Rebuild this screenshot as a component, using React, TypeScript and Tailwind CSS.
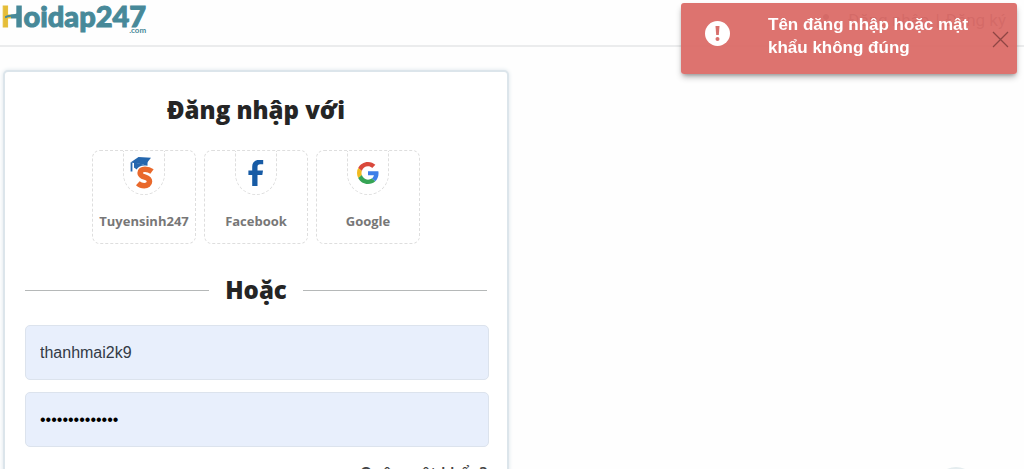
import { useState } from "react";
import type { ReactNode } from "react";
import { FaUser } from "react-icons/fa";

interface Provider {
  name: string;
  icon: ReactNode;
}

function TuyensinhIcon() {
  return (
    <svg width="30" height="34" viewBox="0 0 30 34" aria-hidden="true">
      <path
        d="M23 15.500C21 14 18.500 13.200 16 13.200c-3 0-4.900 1.500-4.900 3.800 0 2.500 2.200 3.400 4.900 4.200 3 .9 4.500 2 4.500 4.300 0 2.700-2.200 4.200-5.200 4.200-2.500 0-4.700-.9-6.500-2.500"
        fill="none"
        stroke="#e9692c"
        strokeWidth="5.500"
      />
      <path d="M1.500 6.500 9.500 1 22 1.700 16.500 8.700Z" fill="#2567ae" />
      <path d="M5 6.500 14.500 8.500 18.500 5 18.500 9.800C13 8.800 10 10 7.500 13.500 6.500 12.500 5.500 12 5 11.500Z" fill="#2567ae" />
      <path d="M2.500 6.500V15.500" stroke="#2567ae" strokeWidth="1.800" fill="none" />
    </svg>
  );
}

function FacebookIcon() {
  return (
    <svg width="16" height="26" viewBox="0 0 16 26" aria-hidden="true">
      <path
        d="M4.200 26V15H.4v-4.500h3.800V6.700C4.200 2.300 6.700 0 10.700 0h4.500v4.300h-3c-2 0-2.700.9-2.700 2.600v3.600h5.500L14.300 15H9.500v11Z"
        fill="#175ba5"
      />
    </svg>
  );
}

function GoogleIcon() {
  return (
    <svg width="22" height="22" viewBox="0 0 48 48" aria-hidden="true">
      <path fill="#d9483b" d="M24 9.500c3.540 0 6.710 1.220 9.210 3.600l6.850-6.850C35.900 2.380 30.470 0 24 0 14.620 0 6.510 5.380 2.560 13.220l7.980 6.190C12.430 13.720 17.740 9.500 24 9.500z" />
      <path fill="#3e7fe8" d="M46.980 24.550c0-1.570-.15-3.090-.38-4.550H24v9.020h12.940c-.58 2.960-2.260 5.480-4.780 7.180l7.730 6c4.510-4.180 7.090-10.360 7.090-17.650z" />
      <path fill="#f2bb20" d="M10.530 28.590c-.48-1.450-.76-2.990-.76-4.590s.27-3.140.76-4.590l-7.980-6.190C.92 16.460 0 20.120 0 24c0 3.880.92 7.540 2.560 10.780l7.970-6.190z" />
      <path fill="#36a455" d="M24 48c6.480 0 11.930-2.130 15.890-5.810l-7.730-6c-2.150 1.450-4.920 2.300-8.160 2.300-6.260 0-11.570-4.220-13.470-9.910l-7.980 6.190C6.510 42.620 14.620 48 24 48z" />
    </svg>
  );
}

const providers: Provider[] = [
  { name: "Tuyensinh247", icon: <TuyensinhIcon /> },
  { name: "Facebook", icon: <FacebookIcon /> },
  { name: "Google", icon: <GoogleIcon /> },
];

function Logo() {
  return (
    <a
      href="#home"
      className="flex flex-col font-['Lato',sans-serif] font-black text-[#478999] [-webkit-text-stroke:1px]"
    >
      <span className="relative flex text-[29px] leading-6">
        <span className="bg-linear-to-r from-[#e5bd38] from-45% to-[#478999] to-45% bg-clip-text text-transparent">
          H
        </span>
        <span>oidap247</span>
        <svg className="absolute top-2 left-1" width="16" height="7" viewBox="0 0 16 7" aria-hidden="true">
          <path d="M0 5.500C4 2 7 5.500 15 1" fill="none" stroke="#478999" strokeWidth="2" />
        </svg>
      </span>
      <span className="self-end text-[8px] leading-1 font-bold [-webkit-text-stroke:0px]">.com</span>
    </a>
  );
}

function ErrorToast({ message, onClose }: { message: string; onClose: () => void }) {
  return (
    <div
      role="alert"
      className="fixed top-[3px] right-[7px] z-50 flex w-[336px] max-w-full items-start rounded-[3px] bg-[#db6b67]/95 pt-2.5 pr-2 pb-[15px] pl-6 text-white shadow-md shadow-black/30"
    >
      <svg className="mt-2 shrink-0" width="25" height="25" viewBox="0 0 25 25" aria-hidden="true">
        <circle cx="12.500" cy="12.500" r="12.500" fill="#fff" />
        <path d="M10.500 5h4l-.7 9h-2.600Z" fill="#d8706c" />
        <circle cx="12.500" cy="18" r="2" fill="#d8706c" />
      </svg>
      <p className="ml-[38px] flex-1 font-['Liberation_Sans',sans-serif] text-[17px] leading-[23px] font-bold">
        {message}
      </p>
      <button type="button" aria-label="Đóng" onClick={onClose} className="mt-[18px] shrink-0 text-[#8e4644]">
        <svg width="17" height="17" viewBox="0 0 17 17" aria-hidden="true">
          <path d="M1 1 16 16M16 1 1 16" stroke="currentColor" strokeWidth="1.300" />
        </svg>
      </button>
    </div>
  );
}

export default function App() {
  const [username, setUsername] = useState("thanhmai2k9");
  const [password, setPassword] = useState("matkhau2k9abcd");
  const [showError, setShowError] = useState(true);

  const inputClass =
    "block h-[55px] w-full rounded-[5px] border border-[#dce3ed] bg-[#e8effc] px-3.5 font-['Liberation_Sans',sans-serif] text-base outline-none";

  return (
    <div className="h-screen overflow-hidden bg-[#fefefe] font-['Open_Sans',sans-serif]">
      <header className="flex h-[47px] items-start justify-between border-b-2 border-[#ebeced] pt-1 pr-[18px] pl-px">
        <Logo />
        <nav className="flex items-center gap-4 pt-1 font-['Roboto',sans-serif] text-[17px] leading-6 text-gray-600">
          <FaUser size={12} />
          <span className="flex gap-1.5">
            <a href="#login">Đăng nhập</a>|<a href="#register">Đăng ký</a>
          </span>
        </nav>
      </header>

      {showError && (
        <ErrorToast message="Tên đăng nhập hoặc mật khẩu không đúng" onClose={() => setShowError(false)} />
      )}

      <main className="px-[3px] pt-[23px]">
        <section className="w-full max-w-[506px] rounded-[5px] border-2 border-[#dce5eb] bg-white pt-5 pr-[18px] pb-10 pl-5 shadow-[0_0_4px_#dce5eb]">
          <h1 className="pr-0.5 text-center text-2xl leading-9 font-extrabold text-[#252525]">Đăng nhập với</h1>

          <div className="mt-[22px] flex justify-center gap-2 pr-0.5">
            {providers.map((provider) => (
              <button
                key={provider.name}
                type="button"
                className="flex h-[94px] w-[104px] flex-col items-center rounded-lg border border-dashed border-[#dedede] text-[13px] font-bold text-[#777]"
              >
                <span className="flex h-11 w-[42px] items-center justify-center rounded-b-full border-x border-b border-dashed border-[#dedede]">
                  {provider.icon}
                </span>
                <span className="mt-4 leading-5">{provider.name}</span>
              </button>
            ))}
          </div>

          <form onSubmit={(e) => e.preventDefault()}>
            <div className="mt-7 flex items-center gap-4 pr-0.5">
              <span className="h-px flex-1 bg-[#b5b8b8]" />
              <h2 className="text-2xl leading-9 font-extrabold text-[#252525]">Hoặc</h2>
              <span className="h-px flex-1 bg-[#b5b8b8]" />
            </div>

            <div className="mt-[17px] flex flex-col gap-3">
              <input
                type="text"
                aria-label="Tên đăng nhập"
                value={username}
                onChange={(e) => setUsername(e.target.value)}
                className={`${inputClass} text-[#333a45]`}
              />
              <input
                type="password"
                aria-label="Mật khẩu"
                value={password}
                onChange={(e) => setPassword(e.target.value)}
                className={`${inputClass} text-black`}
              />
            </div>
            <div className="mt-3.5 pr-0.5 text-right">
              <a href="#forgot" className="text-base font-semibold text-[#444]">
                Quên mật khẩu?
              </a>
            </div>
          </form>
        </section>
      </main>

      <button
        type="button"
        aria-label="Lên đầu trang"
        className="fixed right-[46px] -bottom-[42px] h-11 w-11 rounded-full bg-[#e4ecef]"
      />
    </div>
  );
}
